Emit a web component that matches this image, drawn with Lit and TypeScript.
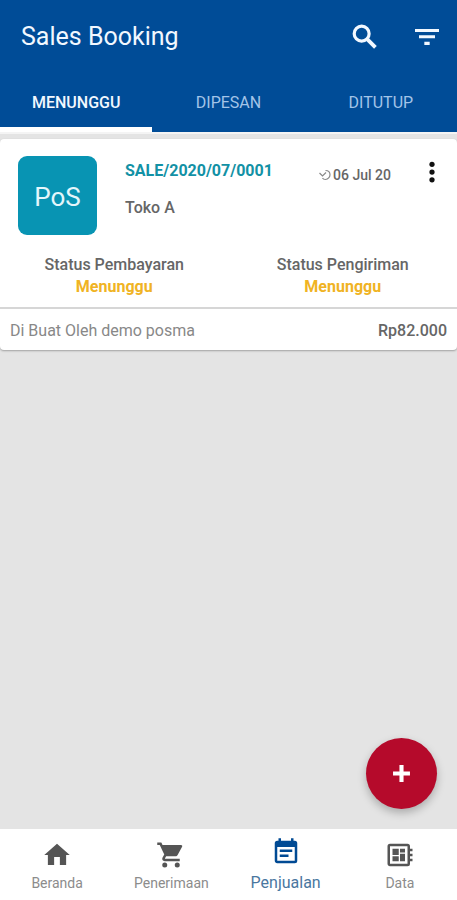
import { LitElement, html, css, svg } from "lit";
import { customElement, property, state } from "lit/decorators.js";
import { classMap } from "lit/directives/class-map.js";

const icons = {
  search: svg`<circle cx="9.500" cy="9.500" r="5.600" fill="none" stroke="currentColor" stroke-width="2.400"/><path d="M13.800 13.800l6 6" fill="none" stroke="currentColor" stroke-width="2.800"/>`,
  filter: svg`<path d="M10 18h4v-2.500h-4V18zM3 6v2.300h18V6H3zm3 7h12v-2.300H6V13z"/>`,
  more: svg`<circle cx="12" cy="5.8" r="2.100"/><circle cx="12" cy="12" r="2.100"/><circle cx="12" cy="18.2" r="2.100"/>`,
  home: svg`<path d="M9.700 20v-6.500h4.600V20h5v-8h2.900L12 3 1.800 12h2.900v8z"/>`,
  cart: svg`<path d="M7 18a2 2 0 1 0 0 4 2 2 0 0 0 0-4zM1 2v2h2l3.6 7.59-1.35 2.45C4.52 15.37 5.48 17 7 17h12v-2H7.42c-.14 0-.25-.11-.25-.25l.03-.12.9-1.63h7.45c.75 0 1.41-.41 1.75-1.03l3.58-6.49A1 1 0 0 0 20.01 4H5.21l-.94-2H1zm16 16a2 2 0 1 0 0 4 2 2 0 0 0 0-4z"/>`,
  note: svg`<path d="M19 3h-1V1h-2v2H8V1H6v2H5a2 2 0 0 0-2 2v14c0 1.1.9 2 2 2h14a2 2 0 0 0 2-2V5a2 2 0 0 0-2-2zm0 16H5V8h14v11zM17 10H7v2h10v-2zm-3 4H7v2h7v-2z"/>`,
  board: svg`<path d="M22 9V7h-2V5a2 2 0 0 0-2-2H4a2 2 0 0 0-2 2v14c0 1.1.9 2 2 2h14a2 2 0 0 0 2-2v-2h2v-2h-2v-2h2v-2h-2V9h2zm-4 10H4V5h14v14zM6 13h5v4H6v-4zm6-6h4v3h-4V7zM6 7h5v5H6V7zm6 4h4v6h-4v-6z"/>`,
  plus: svg`<path d="M10.300 5h3.400v5.300H19v3.400h-5.300V19h-3.400v-5.300H5v-3.400h5.300z"/>`,
  clock: svg`<path d="M1 8l6 6 7-7M13 3c6 0 9 4 9 8.500S18 21 13 21c-3 0-5-1-6-3" fill="none" stroke="currentColor" stroke-width="2.400"/>`,
};

type IconName = keyof typeof icons;

@customElement("app-icon")
class AppIcon extends LitElement {
  @property() name: IconName = "search";

  static styles = css`
    :host { display: block; width: 30px; height: 30px; }
    svg { display: block; width: 100%; height: 100%; fill: currentColor; }
  `;

  render() {
    return html`<svg viewBox="0 0 24 24" aria-hidden="true">${icons[this.name]}</svg>`;
  }
}

interface Sale {
  code: string;
  store: string;
  date: string;
  payment: string;
  delivery: string;
  author: string;
  total: string;
}

@customElement("sale-card")
class SaleCard extends LitElement {
  @property({ attribute: false }) sale!: Sale;

  static styles = css`
    :host { display: block; }
    .card {
      background: #fff;
      border-radius: 4px;
      box-shadow: 0 1px 2px rgba(0, 0, 0, 0.3);
      color: #666;
      font-weight: 500;
      font-size: 16px;
      line-height: 22px;
    }
    .top { display: flex; padding: 17px 10px 0 18px; height: 96px; box-sizing: border-box; }
    .badge {
      flex: none;
      display: flex;
      align-items: center;
      justify-content: center;
      box-sizing: border-box;
      width: 79px;
      height: 79px;
      padding-top: 2px;
      border-radius: 9px;
      background: #0894b3;
      color: #e4f6fb;
      font-size: 26px;
      font-weight: 400;
    }
    .info { flex: 1; display: flex; flex-direction: column; gap: 15px; padding: 4px 0 0 28px; }
    .code { color: #1291a5; font-weight: 700; margin: 0; font-size: 16px; line-height: 22px; }
    .date { display: flex; gap: 2px; align-items: center; height: 22px; margin-top: 8px; font-size: 14px; }
    .date app-icon { width: 12px; height: 12px; color: #888; }
    .menu {
      display: grid;
      place-items: center;
      width: 30px;
      height: 32px;
      margin-left: 26px;
      padding: 0;
      border: 0;
      background: none;
      color: #111;
    }
    .states { display: grid; grid-template-columns: 1fr 1fr; margin: 0; padding: 19px 0 9px; text-align: center; }
    dl dt, dl dd { margin: 0; }
    dd { color: #f0b323; font-weight: 700; }
    .foot {
      display: flex;
      justify-content: space-between;
      border-top: 2px solid #d6d6d6;
      padding: 11px 10px 8px;
    }
    .author { color: #888; font-weight: 400; }
  `;

  render() {
    const s = this.sale;
    return html`
      <article class="card">
        <div class="top">
          <div class="badge">PoS</div>
          <div class="info">
            <h2 class="code">${s.code}</h2>
            <div>${s.store}</div>
          </div>
          <div class="date"><app-icon name="clock"></app-icon><span>${s.date}</span></div>
          <button class="menu" aria-label="Menu"><app-icon name="more"></app-icon></button>
        </div>
        <dl class="states">
          <div><dt>Status Pembayaran</dt><dd>${s.payment}</dd></div>
          <div><dt>Status Pengiriman</dt><dd>${s.delivery}</dd></div>
        </dl>
        <div class="foot"><span class="author">Di Buat Oleh ${s.author}</span><span>${s.total}</span></div>
      </article>
    `;
  }
}

@customElement("app-root")
class AppRoot extends LitElement {
  @state() private tab = 0;

  private tabs = ["MENUNGGU", "DIPESAN", "DITUTUP"];

  private sales: Sale[] = [
    {
      code: "SALE/2020/07/0001",
      store: "Toko A",
      date: "06 Jul 20",
      payment: "Menunggu",
      delivery: "Menunggu",
      author: "demo posma",
      total: "Rp82.000",
    },
  ];

  private links: { label: string; icon: IconName; active?: boolean }[] = [
    { label: "Beranda", icon: "home" },
    { label: "Penerimaan", icon: "cart" },
    { label: "Penjualan", icon: "note", active: true },
    { label: "Data", icon: "board" },
  ];

  static styles = css`
    :host {
      display: flex;
      flex-direction: column;
      min-height: 100vh;
      background: #e4e4e4;
      font-family: Roboto, "Noto Sans", sans-serif;
    }
    button { font: inherit; border: 0; padding: 0; background: none; color: inherit; cursor: pointer; }
    header { background: #004c97; color: #f2f8ff; border-bottom: 2px solid #f4f4f4; }
    .bar { display: flex; align-items: center; height: 74px; padding: 0 14px 0 21px; gap: 30px; }
    h1 { flex: 1; margin: 0; font-size: 25px; line-height: 32px; font-weight: 400; }
    .bar app-icon { width: 32px; height: 32px; }
    .tabs { display: grid; grid-template-columns: repeat(3, 1fr); }
    .tab {
      height: 58px;
      border-bottom: 5px solid transparent;
      padding-top: 4px;
      font-size: 16px;
      font-weight: 400;
      color: #a3c4e8;
    }
    .tab.on { color: #f2f8ff; border-color: #fff; font-weight: 500; }
    main { flex: 1; padding-top: 5px; }
    .dock { position: sticky; bottom: 0; }
    .fab {
      position: absolute;
      right: 20px;
      bottom: 91px;
      display: grid;
      place-items: center;
      width: 71px;
      height: 71px;
      border-radius: 50%;
      background: #b50a2b;
      color: #fff;
      box-shadow: 0 4px 8px rgba(0, 0, 0, 0.25);
    }
    .fab app-icon { width: 29px; height: 29px; }
    nav { display: grid; grid-template-columns: repeat(4, 1fr); height: 71px; background: #fff; }
    nav a {
      display: flex;
      flex-direction: column;
      align-items: center;
      padding-top: 11px;
      gap: 3px;
      color: #555;
      text-decoration: none;
      font-size: 14px;
      line-height: 20px;
    }
    nav a span { color: #8c8c8c; }
    nav a.on { padding-top: 8px; gap: 6px; font-size: 16px; color: #004a94; }
    nav a.on span { color: #4a779f; }
  `;

  render() {
    return html`
      <header>
        <div class="bar">
          <h1>Sales Booking</h1>
          <button aria-label="Cari"><app-icon name="search"></app-icon></button>
          <button aria-label="Filter"><app-icon name="filter"></app-icon></button>
        </div>
        <div class="tabs" role="tablist">
          ${this.tabs.map(
            (t, i) => html`<button
              role="tab"
              aria-selected=${i === this.tab}
              class=${classMap({ tab: true, on: i === this.tab })}
              @click=${() => (this.tab = i)}
            >${t}</button>`
          )}
        </div>
      </header>
      <main>${this.sales.map((s) => html`<sale-card .sale=${s}></sale-card>`)}</main>
      <div class="dock">
        <button class="fab" aria-label="Tambah"><app-icon name="plus"></app-icon></button>
        <nav>
          ${this.links.map(
            (l) => html`<a href="#${l.label}" class=${classMap({ on: !!l.active })}
              ><app-icon name=${l.icon}></app-icon><span>${l.label}</span></a
            >`
          )}
        </nav>
      </div>
    `;
  }
}
